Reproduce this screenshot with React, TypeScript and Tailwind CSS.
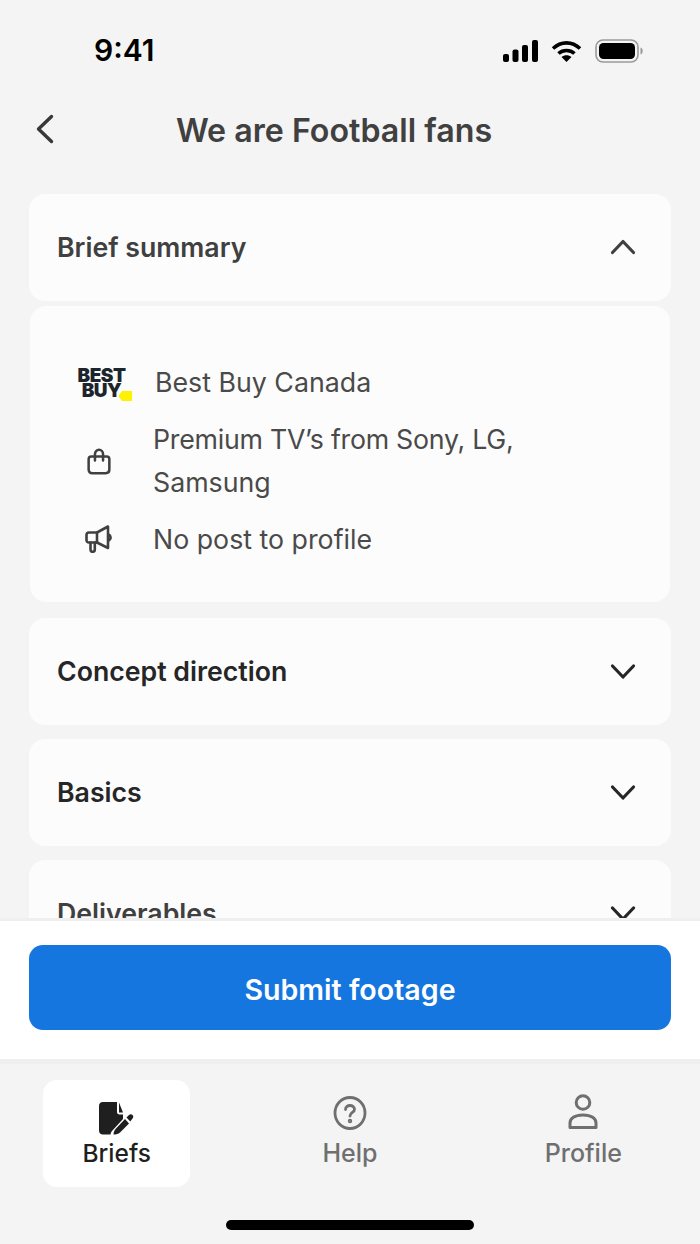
import React from "react";

const Chevron = ({ up = false, color = "#262626" }: { up?: boolean; color?: string }) => (
  <svg width="26" height="17" viewBox="0 0 26 17" fill="none">
    <path d={up ? "M2.5 13.5L13 2.5L23.5 13.5" : "M2.5 3L13 14L23.5 3"} stroke={color} strokeWidth="3.2" strokeLinecap="round" strokeLinejoin="round" />
  </svg>
);

const Row = ({ title, color = "#262626", children }: { title: string; color?: string; children?: React.ReactNode }) => (
  <div className="h-[107px] shrink-0 rounded-[16px] bg-[#fcfcfc] flex items-center justify-between pl-[28px] pr-[35px]">
    <span className="text-[26.7px] font-semibold leading-none" style={{ color }}>{title}</span>
    {children ?? <Chevron />}
  </div>
);

export default function App() {
  return (
    <div className="w-[700px] h-[1244px] bg-[#f4f4f4] flex flex-col overflow-hidden font-['Inter',sans-serif]">
      <div className="h-[100px] shrink-0 flex items-center justify-between pl-[94px] pr-[57px]">
        <span className="text-[30px] font-semibold text-black leading-none">9:41</span>
        <div className="flex items-center mt-[2px]">
          <svg width="35" height="22" viewBox="0 0 35 22" fill="black">
            <rect x="0" y="14" width="6" height="8" rx="2" />
            <rect x="9.5" y="9.5" width="6" height="12.5" rx="2" />
            <rect x="19" y="5" width="6" height="17" rx="2" />
            <rect x="29" y="0" width="6" height="22" rx="2" />
          </svg>
          <svg width="31" height="22" viewBox="0 0 31 22" fill="none" stroke="black" strokeWidth="3.6" className="ml-[13px]">
            <path d="M2 8.5C10 1 21 1 29 8.5" />
            <path d="M7.5 13.5C12 9.5 19 9.5 23.5 13.5" />
            <path d="M15.5 22L10.5 17C13.5 14.5 17.5 14.5 20.5 17Z" fill="black" stroke="none" />
          </svg>
          <svg width="48" height="24" viewBox="0 0 48 24" fill="none" className="ml-[13px]">
            <rect x="1" y="1" width="42" height="22" rx="7" stroke="#9a9a9a" strokeWidth="1.6" />
            <rect x="4" y="4" width="36" height="16" rx="4.5" fill="black" />
            <path d="M45.5 8.5C47 9 47.7 10.4 47.7 12C47.7 13.6 47 15 45.5 15.5Z" fill="#9a9a9a" />
          </svg>
        </div>
      </div>

      <div className="h-[60px] shrink-0 relative flex items-center justify-center pr-[32px]">
        <svg width="20" height="30" viewBox="0 0 20 30" fill="none" className="absolute left-[35px] top-[14px]">
          <path d="M16.5 2.5L3.5 15L16.5 27.5" stroke="#383838" strokeWidth="3.4" strokeLinecap="round" strokeLinejoin="round" />
        </svg>
        <span className="text-[32.2px] font-semibold text-[#404040] leading-none pt-[2px]">We are Football fans</span>
      </div>

      <div className="flex-1 min-h-0 overflow-hidden px-[29px] pt-[34px] flex flex-col">
        <Row title="Brief summary" color="#404040">
          <Chevron up color="#404040" />
        </Row>
        <div className="mt-[5px] mx-[1px] h-[296px] shrink-0 rounded-[16px] bg-[#fcfcfc] text-[26.75px] text-[#4a4a4a] pt-[55px]">
          <div className="flex items-center h-[42px]">
            <div className="w-[125px] flex justify-end pr-[22px]">
              <div className="relative w-[56px] h-[36px] text-[#1d252c] font-black text-[19px] leading-[15px] tracking-[-0.5px] text-center">
                <div className="pr-[7px] pt-[4px]">BEST</div>
                <div className="pr-[7px]">BUY</div>
                <svg width="13" height="10" viewBox="0 0 13 10" className="absolute right-[1px] bottom-[-1px]">
                  <path d="M3 0H13V10H3L0 6V4Z" fill="#fff200" />
                </svg>
              </div>
            </div>
            <span className="leading-none">Best Buy Canada</span>
          </div>
          <div className="flex items-center mt-[15px]">
            <div className="w-[123px] flex justify-end pr-[42px] shrink-0">
              <svg width="24" height="27" viewBox="0 0 26 30" fill="none" stroke="#404040" strokeWidth="2.8" strokeLinejoin="round" strokeLinecap="round">
                <path d="M4.5 9.5H21.5C23.5 9.5 24.5 10.7 24.5 12.5V24C24.5 26.5 23 28 20.5 28H5.5C3 28 1.5 26.5 1.5 24V12.5C1.5 10.7 2.5 9.5 4.5 9.5Z" />
                <path d="M8.5 14V7C8.5 4 10.5 2 13 2C15.5 2 17.5 4 17.5 7V14" />
              </svg>
            </div>
            <span className="leading-[43px]">
              <span className="tracking-[-0.26px]">Premium TV’s from Sony, LG,</span>
              <br />
              Samsung
            </span>
          </div>
          <div className="flex items-center mt-[14px]">
            <div className="w-[123px] flex justify-end pr-[40px] shrink-0">
              <svg width="28" height="28" viewBox="0 0 28 28" fill="none" stroke="#404040" strokeWidth="2.6" strokeLinejoin="round" strokeLinecap="round">
                <path d="M4 7.5H12L23 1.5V23L12 17.5H4C2.5 17.5 1.5 16.5 1.5 15V10C1.5 8.5 2.5 7.5 4 7.5Z" />
                <path d="M12 7.5V17.5" />
                <path d="M5.5 17.5V24.5C5.5 26 6.5 26.8 7.5 26.8C8.8 26.8 9.8 26 9.8 24.5V17.5" />
                <path d="M23.5 9.5C26 10.5 26.5 14 23.5 15.5" />
              </svg>
            </div>
            <span className="leading-[42px]">No post to profile</span>
          </div>
        </div>
        <div className="mt-[16px]"><Row title="Concept direction" /></div>
        <div className="mt-[14px]"><Row title="Basics" /></div>
        <div className="mt-[14px]"><Row title="Deliverables" color="#404040" /></div>
      </div>

      <div className="h-[146px] shrink-0 bg-white border-t-[3px] border-b-[5px] border-[#efefef] px-[29px] pt-[24px]">
        <div className="h-[85px] rounded-[14px] bg-[#1476de] flex items-center justify-center text-white text-[28.6px] font-semibold leading-none pt-[5px]">
          Submit footage
        </div>
      </div>

      <div className="h-[180px] shrink-0 bg-[#f4f4f4] relative">
        <div className="grid grid-cols-3 pt-[16px]">
          <div className="flex justify-center">
            <div className="w-[147px] h-[107px] bg-white rounded-[14px] flex flex-col items-center pt-[21px]">
              <svg width="38" height="34" viewBox="0 0 38 34" className="-mr-[1px]">
                <path d="M5 1H19V11C19 12.5 20 13.5 21.5 13.5H25V18L14 30C13.2 31 12.8 32 12.5 33.5H5C2.5 33.5 1 32 1 29.5V5C1 2.5 2.5 1 5 1Z" fill="#1f1f1f" />
                <path d="M21 1.5L25 11.5H21Z" fill="#1f1f1f" />
                <path d="M15.5 33.5C15.5 31 16.5 29 18 27.5L27 18L31 22.5L22 31.5C20.5 33 18 33.5 15.5 33.5Z" fill="#1f1f1f" />
                <path d="M28.5 16.5L31 14C32 13 33.5 13 34.5 14C35.5 15 35.5 16.5 34.5 17.5L32.3 20.5Z" fill="#1f1f1f" />
              </svg>
              <span className="text-[24.5px] text-[#1f1f1f] font-medium leading-none mt-[6px]">Briefs</span>
            </div>
          </div>
          <div className="flex flex-col items-center pt-[16px] text-[#6f6f6f]">
            <svg width="34" height="34" viewBox="0 0 34 34" fill="none" stroke="#6f6f6f" strokeWidth="2.8" strokeLinecap="round">
              <ellipse cx="17" cy="17" rx="15" ry="15.5" />
              <path d="M12.5 13.5C12.5 11 14.5 9.5 17 9.5C19.5 9.5 21.5 11 21.5 13.5C21.5 16.5 17 16.5 17 20" />
              <circle cx="17" cy="25" r="0.8" fill="#6f6f6f" />
            </svg>
            <span className="text-[25px] font-medium leading-none mt-[11px]">Help</span>
          </div>
          <div className="flex flex-col items-center pt-[14px] text-[#6f6f6f]">
            <svg width="30" height="36" viewBox="0 0 30 36" fill="none" stroke="#6f6f6f" strokeWidth="3" strokeLinejoin="round">
              <circle cx="15" cy="8.5" r="6.8" />
              <path d="M2 33.5V29C2 24.5 6.5 21 15 21C23.5 21 28 24.5 28 29V33.5Z" />
            </svg>
            <span className="text-[25px] font-medium leading-none mt-[11px]">Profile</span>
          </div>
        </div>
        <div className="absolute left-[226px] top-[156px] w-[248px] h-[10px] rounded-full bg-black" />
      </div>
    </div>
  );
}
